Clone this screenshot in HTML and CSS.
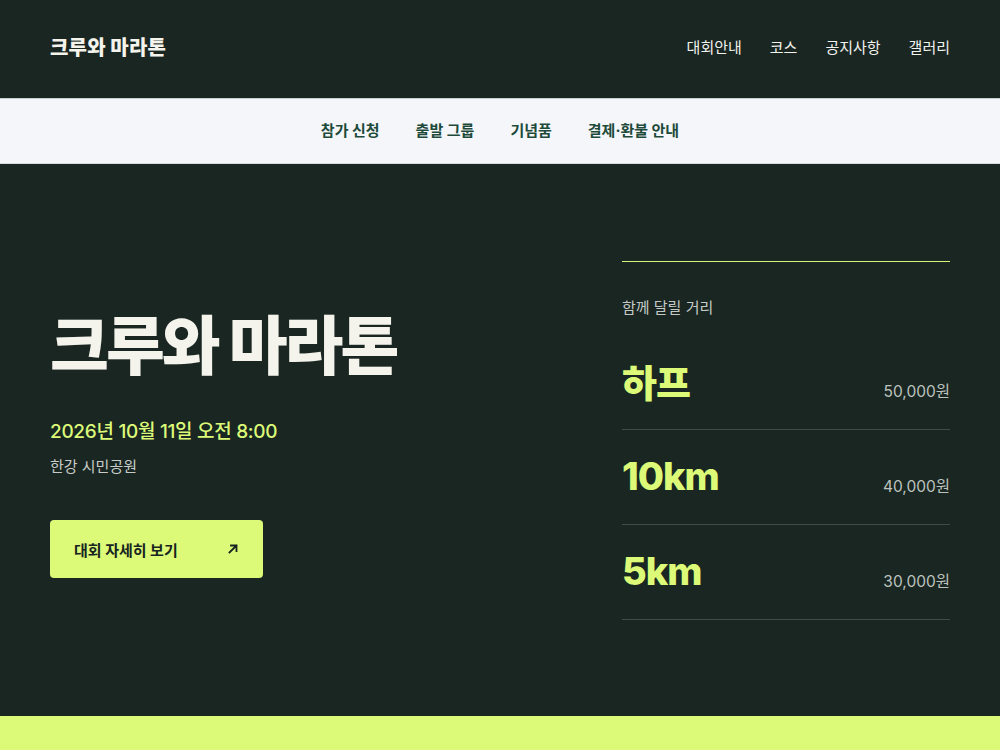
FILE: index.html
```html
<!DOCTYPE html>
<html lang="ko">
<head>
<meta charset="utf-8">
<title>크루와 마라톤</title>
<link rel="stylesheet" href="styles.css">
</head>
<body>
<header class="topbar">
  <div class="logo">크루와 마라톤</div>
  <nav class="mainnav">
    <a href="#">대회안내</a>
    <a href="#">코스</a>
    <a href="#">공지사항</a>
    <a href="#">갤러리</a>
  </nav>
</header>
<nav class="subnav">
  <a href="#">참가 신청</a>
  <a href="#">출발 그룹</a>
  <a href="#">기념품</a>
  <a href="#">결제·환불 안내</a>
</nav>
<main class="hero">
  <section class="hero-left">
    <h1 class="title">크루와 마라톤</h1>
    <p class="date">2026년 10월 11일 오전 8:00</p>
    <p class="place">한강 시민공원</p>
    <a href="#" class="cta">
      <span>대회 자세히 보기</span>
      <svg class="arrow" width="12" height="12" viewBox="0 0 12 12"><path d="M2.5 9.5 L9.5 2.5 M4 2.5 H9.5 V8" fill="none" stroke="#17241f" stroke-width="1.8" stroke-linecap="square"/></svg>
    </a>
  </section>
  <section class="hero-right">
    <div class="dist-label">함께 달릴 거리</div>
    <ul class="dist-list">
      <li><span class="dist">하프</span><span class="price">50,000원</span></li>
      <li><span class="dist">10km</span><span class="price">40,000원</span></li>
      <li><span class="dist">5km</span><span class="price">30,000원</span></li>
    </ul>
  </section>
</main>
<div class="limebar"></div>
</body>
</html>
```

FILE: styles.css
```css
* { box-sizing: border-box; }
html, body { margin: 0; padding: 0; }
body {
  background: #1a2622;
  font-family: Inter, "Noto Sans CJK KR", sans-serif;
  color: #f4f3ec;
  width: 1000px;
  height: 750px;
  overflow: hidden;
}
a { text-decoration: none; color: inherit; }

.topbar {
  height: 98px;
  padding: 0 50px 5px;
  display: flex;
  align-items: center;
  justify-content: space-between;
}
.logo {
  font-size: 20px;
  font-weight: 800;
  letter-spacing: 0.2px;
  color: #f4f3ec;
}
.mainnav { display: flex; gap: 28px; }
.mainnav a { font-size: 15px; color: #f2f2ee; }

.subnav {
  height: 66px;
  padding-bottom: 3px;
  background: #f4f6fa;
  border-top: 1px solid #c9d0d3;
  border-bottom: 1px solid #d6dbe0;
  display: flex;
  justify-content: center;
  align-items: center;
  gap: 36px;
}
.subnav a { font-size: 15px; font-weight: 700; color: #1e4a3a; }

.hero {
  height: 552px;
  padding: 0 50px;
  display: grid;
  grid-template-columns: 1fr 328px;
  align-items: center;
}
.title {
  margin: 12px 0 0;
  font-size: 64px;
  font-weight: 800;
  letter-spacing: -3px;
  line-height: 1;
  color: #f4f3ec;
}
.date {
  margin: 38px 0 0;
  font-size: 19px;
  font-weight: 500;
  color: #dcfa78;
  letter-spacing: -0.3px;
}
.place {
  margin: 12px 0 0;
  font-size: 15px;
  color: #c7ccc8;
}
.cta {
  margin-top: 44px;
  width: 213px;
  height: 58px;
  background: #dcfa78;
  border-radius: 4px;
  display: flex;
  align-items: center;
  justify-content: space-between;
  padding: 0 24px;
  font-size: 15px;
  font-weight: 700;
  color: #17241f;
}
.arrow { display: block; }

.hero-right {
  border-top: 1px solid #d4f47a;
  padding-top: 34px;
}
.dist-label { font-size: 15px; color: #c4cac6; }
.dist-list { list-style: none; margin: 18px 0 0; padding: 0; }
.dist-list li {
  height: 95px;
  border-bottom: 1px solid #3f4d47;
  display: flex;
  align-items: center;
  justify-content: space-between;
}
.dist {
  font-size: 38px;
  font-weight: 800;
  letter-spacing: -1px;
  color: #dcfa78;
  margin-top: -2px;
}
.price { font-size: 15.5px; color: #bcc3be; margin-top: 16px; }

.limebar { height: 40px; background: #dcfa78; }
```
